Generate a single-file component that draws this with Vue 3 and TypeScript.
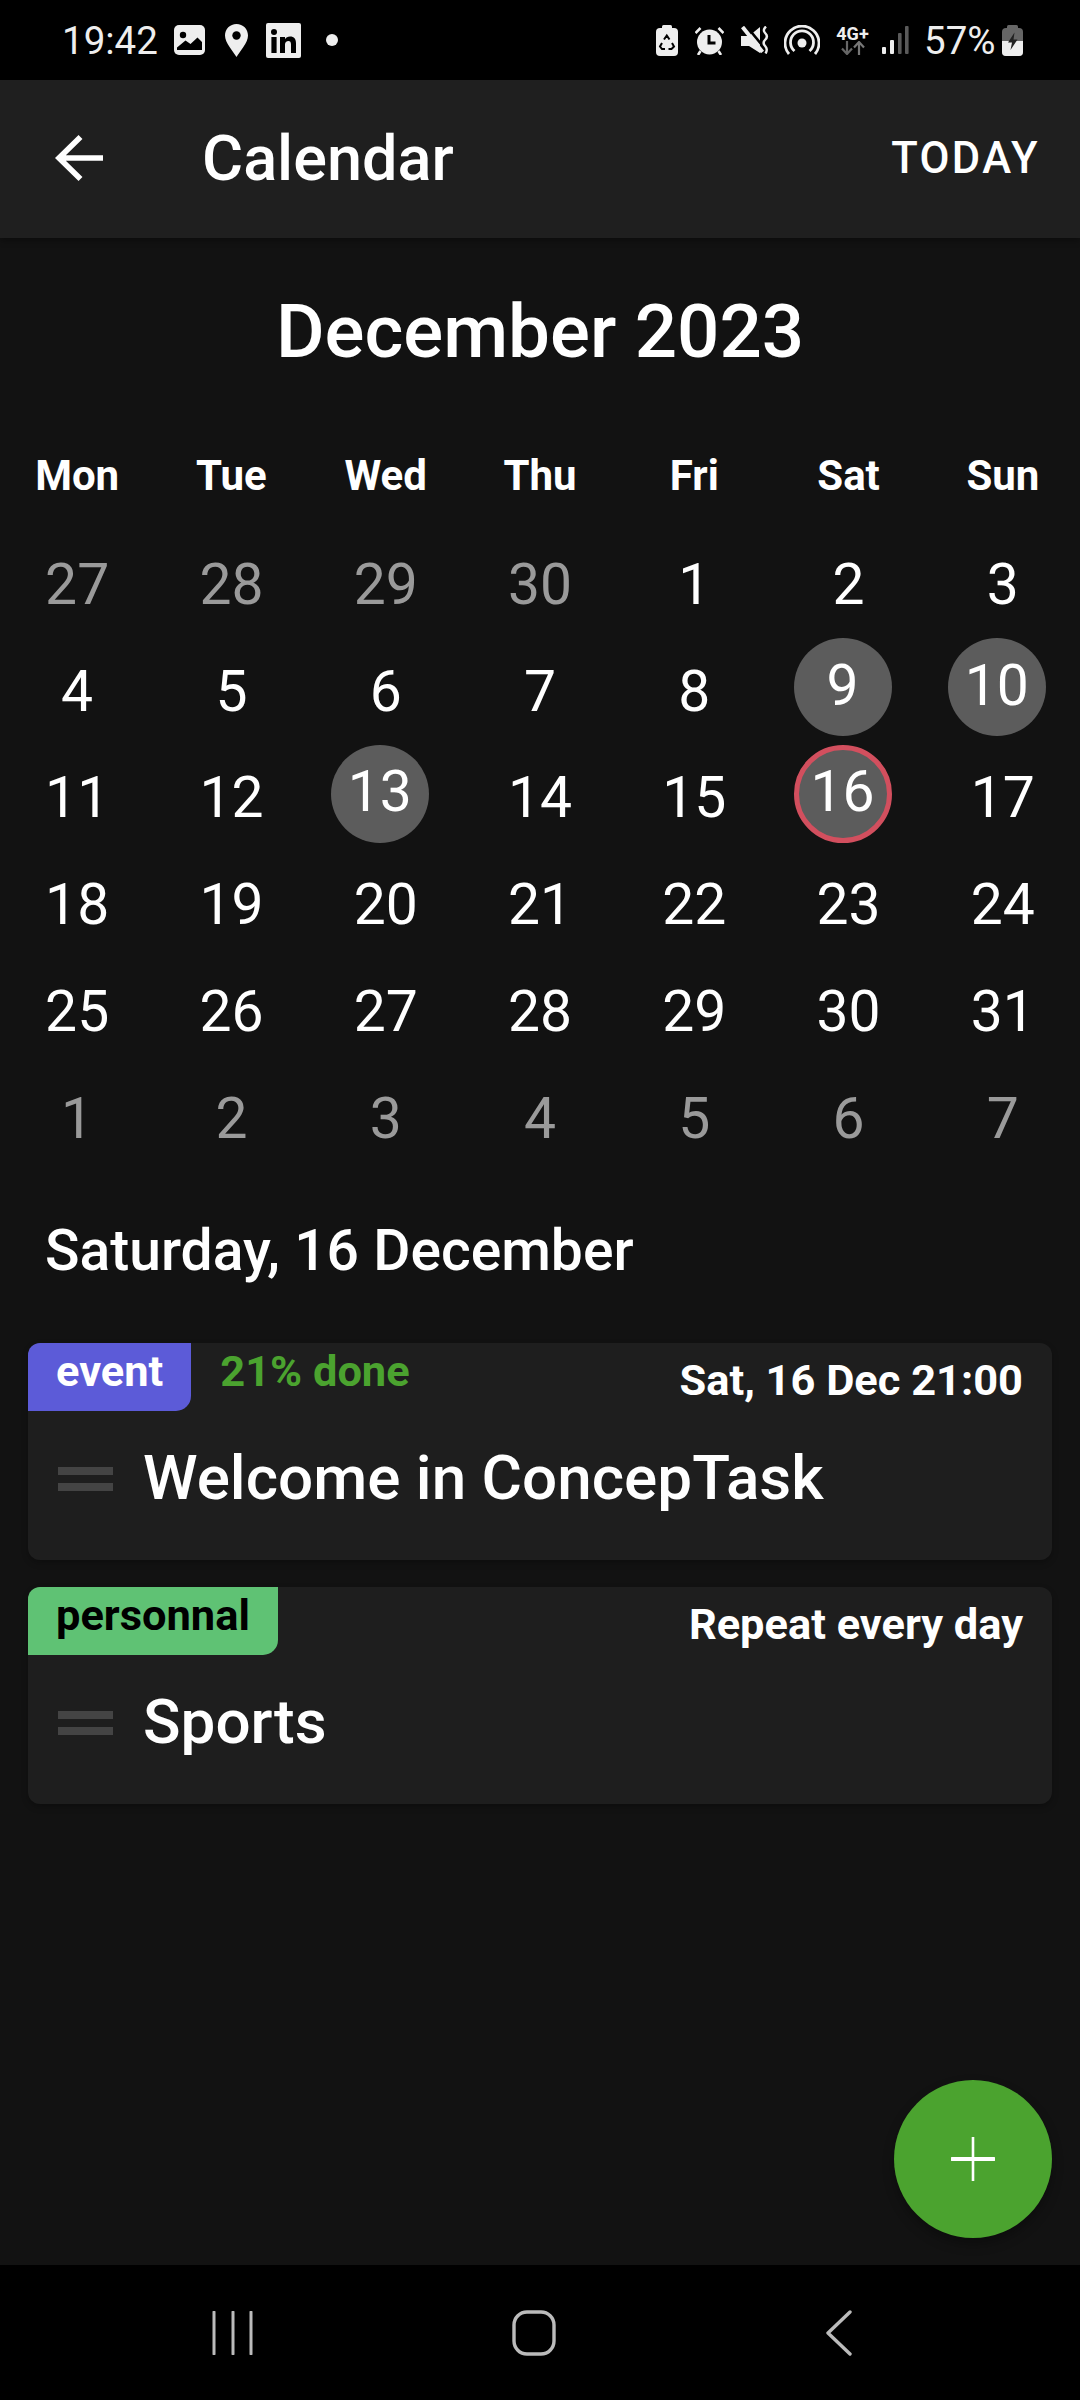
<script setup lang="ts">
interface Day {
    label: number;
    muted?: boolean;
    marked?: boolean;
    today?: boolean;
}

interface Task {
    tag: string;
    tagClass: string;
    progress?: string;
    when: string;
    title: string;
}

const weekdays = ['Mon', 'Tue', 'Wed', 'Thu', 'Fri', 'Sat', 'Sun'];

const days: Day[] = [];
for (const n of [27, 28, 29, 30]) days.push({ label: n, muted: true });
for (let n = 1; n <= 31; n++) {
    days.push({ label: n, marked: [9, 10, 13, 16].includes(n), today: n === 16 });
}
for (let n = 1; n <= 7; n++) days.push({ label: n, muted: true });

const tasks: Task[] = [
    { tag: 'event', tagClass: 'tag_event', progress: '21% done', when: 'Sat, 16 Dec 21:00', title: 'Welcome in ConcepTask' },
    { tag: 'personnal', tagClass: 'tag_personal', when: 'Repeat every day', title: 'Sports' },
];
</script>

<template>
    <div class="screen">
        <div class="status">
            <span class="clock">19:42</span>
            <svg class="st_image" width="31" height="30" viewBox="0 0 31 30">
                <rect width="31" height="30" rx="5" fill="#eee" />
                <circle cx="9" cy="10" r="3.2" fill="#000" />
                <path d="M3 25V22.5L11.5 15.5L16.5 19L23.5 12.5L28 17V25Z" fill="#000" />
            </svg>
            <svg class="st_pin" width="23" height="33" viewBox="0 0 23 33">
                <path d="M11.5 0C5 0 0 5 0 11.5C0 19 8 27 11.5 33C15 27 23 19 23 11.5C23 5 18 0 11.5 0Z" fill="#eee" />
                <circle cx="11.5" cy="11.5" r="4.2" fill="#000" />
            </svg>
            <svg class="st_linkedin" width="35" height="35" viewBox="0 0 35 35">
                <rect width="35" height="35" rx="2" fill="#eee" />
                <circle cx="8" cy="9" r="3" fill="#000" />
                <rect x="5.4" y="14" width="5.2" height="16" fill="#000" />
                <path d="M14 14H19V16.2C20 14.7 21.8 13.6 24 13.6C28.2 13.6 30 16.2 30 20.4V30H25V21.4C25 19.2 24.2 18 22.4 18C20.4 18 19 19.4 19 21.6V30H14Z" fill="#000" />
            </svg>
            <span class="st_dot"></span>
            <span class="status_gap"></span>
            <svg class="st_recycle" width="22" height="31" viewBox="0 0 22 31">
                <rect x="6" width="10" height="5" rx="1.5" fill="#eee" />
                <rect y="3" width="22" height="28" rx="4" fill="#eee" />
                <path d="M8 14.5L10.8 10.5L13.5 14.5M16 18L18 21.5L15.5 24H12.5M9 24H6L4 21.5L6 18" fill="none" stroke="#000" stroke-width="2" />
            </svg>
            <svg class="st_alarm" width="29" height="29" viewBox="0 0 29 29">
                <circle cx="14.5" cy="16" r="12.5" fill="#eee" />
                <path d="M0.5 7L5.5 2M23.5 2L28.5 7M5.5 25L3 29M23.5 25L26 29" stroke="#eee" stroke-width="2.6" />
                <path d="M14 9V17H20.5" fill="none" stroke="#000" stroke-width="3" />
            </svg>
            <svg class="st_mute" width="28" height="28" viewBox="0 0 28 28">
                <path d="M0 10H8L19 1V27L8 20H0Z" fill="#eee" />
                <path d="M4.5 -1L25 24" stroke="#000" stroke-width="2.6" />
                <path d="M1.5 1L21.5 26" stroke="#eee" stroke-width="4" />
                <path d="M25 0.5Q21 4 24.5 7.5Q27.5 10.5 24 14Q21 17 24.5 20.5Q27 23.5 24.5 27.5" fill="none" stroke="#eee" stroke-width="2.4" />
            </svg>
            <svg class="st_hotspot" width="36" height="30" viewBox="0 0 36 30">
                <circle cx="18" cy="18" r="4.5" fill="#eee" />
                <path d="M10.5 26A11.5 11.5 0 1 1 25.5 26" fill="none" stroke="#eee" stroke-width="2.8" />
                <path d="M5 29A17 17 0 1 1 31 29" fill="none" stroke="#eee" stroke-width="2.8" />
            </svg>
            <div class="st_network">
                <span class="net_label">4G+</span>
                <svg width="24" height="14" viewBox="0 0 24 14">
                    <path d="M6 0V12M1 7.5L6 13L11 7.5" fill="none" stroke="#666" stroke-width="2.2" />
                    <path d="M18 14V2M13 6.5L18 1L23 6.5" fill="none" stroke="#777" stroke-width="2.2" />
                </svg>
            </div>
            <svg class="st_signal" width="27" height="28" viewBox="0 0 27 28">
                <rect y="21" width="4" height="7" rx="1" fill="#eee" />
                <rect x="8" y="14" width="4" height="14" rx="1" fill="#eee" />
                <rect x="16" y="7" width="3.6" height="21" rx="1" fill="#5a5a5a" />
                <rect x="23" width="3.6" height="28" rx="1" fill="#5a5a5a" />
            </svg>
            <span class="percent">57%</span>
            <svg class="st_battery" width="21" height="31" viewBox="0 0 21 31">
                <rect x="5" width="11" height="5" rx="1.5" fill="#666" />
                <rect y="3" width="21" height="28" rx="4" fill="#666" />
                <path d="M0 16H21V27A4 4 0 0 1 17 31H4A4 4 0 0 1 0 27Z" fill="#eee" />
                <path d="M12.5 7.5L6 17.5H10L8.5 25L15.5 14.5H11.5Z" fill="#222" />
            </svg>
        </div>

        <header class="appbar">
            <svg class="back" width="49" height="46" viewBox="0 0 49 46">
                <path d="M49 23H5M26.5 2L5 23L26.5 44" fill="none" stroke="#fff" stroke-width="5.6" />
            </svg>
            <h1 class="appbar_title">Calendar</h1>
            <span class="appbar_action">TODAY</span>
        </header>

        <main class="content">
            <h2 class="month">December 2023</h2>

            <div class="weekdays">
                <span v-for="name in weekdays" :key="name" class="weekday">{{ name }}</span>
            </div>

            <div class="days">
                <div v-for="(day, i) in days" :key="i" class="day">
                    <span v-if="day.marked" class="day_mark" :class="{ day_today: day.today }">{{ day.label }}</span>
                    <span v-else :class="{ day_muted: day.muted }">{{ day.label }}</span>
                </div>
            </div>

            <h3 class="selected">Saturday, 16 December</h3>

            <div class="tasks">
                <article v-for="task in tasks" :key="task.title" class="task">
                    <div class="task_head">
                        <span class="tag" :class="task.tagClass">{{ task.tag }}</span>
                        <span v-if="task.progress" class="progress">{{ task.progress }}</span>
                        <span class="when">{{ task.when }}</span>
                    </div>
                    <div class="task_body">
                        <span class="handle"></span>
                        <span class="task_title">{{ task.title }}</span>
                    </div>
                </article>
            </div>

            <button class="fab" type="button" aria-label="Add">
                <svg width="44" height="44" viewBox="0 0 44 44">
                    <path d="M22 0V44" stroke="#fff" stroke-width="2.6" stroke-linecap="round" />
                    <path d="M1 22H43" stroke="#fff" stroke-width="4" stroke-linecap="round" />
                </svg>
            </button>
        </main>

        <nav class="navbar">
            <svg class="nav_recent" width="42" height="44" viewBox="0 0 42 44">
                <path d="M2 1V43M21 1V43M39 1V43" stroke="#bbb" stroke-width="3" stroke-linecap="round" />
            </svg>
            <svg class="nav_home" width="44" height="46" viewBox="0 0 44 46">
                <rect x="2" y="2" width="40" height="42" rx="13" fill="none" stroke="#bbb" stroke-width="3.4" />
            </svg>
            <svg class="nav_back" width="26" height="46" viewBox="0 0 26 46">
                <path d="M24 2L2 23L24 44" fill="none" stroke="#bbb" stroke-width="3.4" stroke-linecap="round" stroke-linejoin="round" />
            </svg>
        </nav>
    </div>
</template>

<style scoped>
    .screen {
        display: flex;
        flex-direction: column;
        width: 1080px;
        height: 2400px;
        overflow: hidden;
        background-color: #121212;
        color: #fff;
        font-family: Roboto, "Liberation Sans", sans-serif;
    }

    .status {
        display: flex;
        align-items: center;
        flex: none;
        height: 80px;
        padding-left: 62px;
        background-color: #000;
        color: #eee;
        font-size: 38.5px;
    }

    .status svg {
        flex: none;
        display: block;
    }

    .clock {
        width: 112px;
    }

    .st_pin {
        margin-left: 20px;
    }

    .st_linkedin {
        margin-left: 18px;
    }

    .st_dot {
        width: 12px;
        height: 12px;
        margin-left: 25px;
        border-radius: 50%;
        background-color: #eee;
    }

    .status_gap {
        width: 318px;
    }

    .st_alarm {
        margin-left: 17px;
    }

    .st_mute {
        margin-left: 17px;
    }

    .st_hotspot {
        margin-left: 15px;
    }

    .st_network {
        display: flex;
        flex-direction: column;
        align-items: center;
        width: 33px;
        margin-left: 16px;
    }

    .net_label {
        font-size: 18px;
        font-weight: 700;
        line-height: 15px;
        white-space: nowrap;
    }

    .st_signal {
        margin-left: 13px;
    }

    .percent {
        width: 72px;
        margin-left: 15px;
        white-space: nowrap;
    }

    .st_battery {
        margin-left: 6px;
    }

    .appbar {
        display: flex;
        align-items: center;
        flex: none;
        height: 158px;
        padding: 0 40px 2px 54px;
        box-sizing: border-box;
        background-color: #1f1f1f;
        box-shadow: 0 3px 6px rgba(0, 0, 0, .3);
        position: relative;
    }

    .appbar_title {
        margin: 0 0 0 99px;
        font-size: 63px;
        font-weight: 500;
    }

    .appbar_action {
        margin-left: auto;
        font-size: 43.5px;
        font-weight: 500;
        letter-spacing: 2.4px;
    }

    .content {
        position: relative;
        flex: 1;
    }

    .month {
        height: 184px;
        margin: 0;
        padding-top: 3px;
        box-sizing: border-box;
        font-size: 74.5px;
        font-weight: 500;
        line-height: 181px;
        text-align: center;
    }

    .weekdays,
    .days {
        display: grid;
        grid-template-columns: repeat(7, 1fr);
    }

    .days {
        padding-top: 1px;
    }

    .weekday {
        height: 108px;
        font-size: 42px;
        font-weight: 700;
        line-height: 108px;
        text-align: center;
    }

    .day {
        display: flex;
        align-items: center;
        justify-content: center;
        height: 106.8px;
        font-size: 57px;
    }

    .day_muted {
        color: #9a9a9a;
    }

    .day_mark {
        display: flex;
        align-items: center;
        justify-content: center;
        flex: none;
        box-sizing: border-box;
        width: 98px;
        height: 98px;
        padding-bottom: 4px;
        border-radius: 50%;
        background-color: #5c5c5c;
        transform: translate(-6px, -4px);
    }

    .day_today {
        border: 5.5px solid #d24f5e;
    }

    .selected {
        height: 157px;
        margin: 0;
        padding-left: 45px;
        font-size: 57px;
        font-weight: 500;
        line-height: 157px;
    }

    .tasks {
        display: flex;
        flex-direction: column;
        gap: 27px;
        margin: 14px 28px 0;
    }

    .task {
        height: 217px;
        border-radius: 12px;
        background-color: #1e1e1e;
        box-shadow: 0 3px 6px rgba(0, 0, 0, .25);
    }

    .task_head {
        display: flex;
        align-items: flex-start;
        height: 68px;
        font-size: 43.4px;
        font-weight: 700;
    }

    .tag {
        height: 68px;
        padding: 0 28px;
        border-radius: 12px 0 15px 0;
        line-height: 57px;
    }

    .tag_event {
        background-color: #5c5bd8;
        color: #fff;
    }

    .tag_personal {
        background-color: #5fc274;
        color: #000;
    }

    .progress {
        margin-left: 29px;
        color: #4ba32f;
        line-height: 57px;
    }

    .when {
        margin-left: auto;
        padding-right: 29px;
        line-height: 76px;
    }

    .task_body {
        display: flex;
        align-items: center;
        height: 136px;
        padding-left: 30px;
    }

    .handle {
        flex: none;
        width: 55px;
        height: 24px;
        border-top: 8px solid #444;
        border-bottom: 8px solid #444;
        box-sizing: border-box;
    }

    .task_title {
        margin: 0 0 3px 30px;
        font-size: 62px;
        font-weight: 500;
    }

    .fab {
        position: absolute;
        top: 1842px;
        left: 894px;
        display: flex;
        align-items: center;
        justify-content: center;
        width: 158px;
        height: 158px;
        padding: 0;
        border: 0;
        border-radius: 50%;
        background-color: #4ba32f;
        box-shadow: 0 6px 12px rgba(0, 0, 0, .3);
    }

    .navbar {
        display: flex;
        align-items: center;
        flex: none;
        height: 135px;
        padding-left: 212px;
        background-color: #000;
    }

    .navbar svg {
        flex: none;
    }

    .nav_home {
        margin-left: 258px;
    }

    .nav_back {
        margin-left: 270px;
    }
</style>
